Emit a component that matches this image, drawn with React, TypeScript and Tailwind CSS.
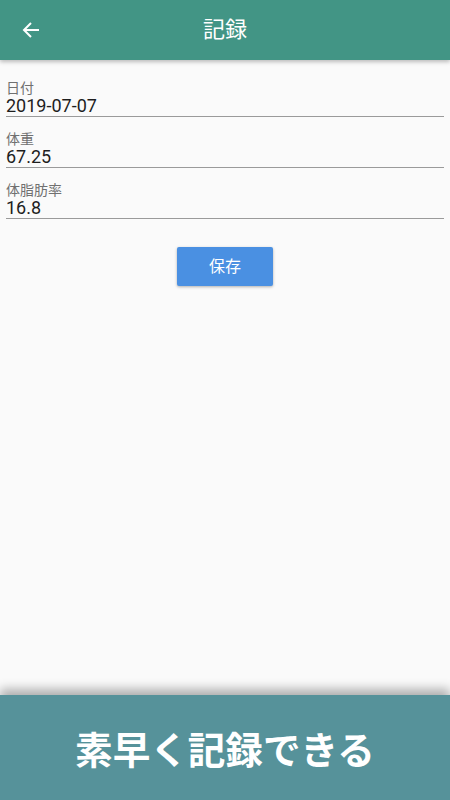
import React from "react";

const fields = [
  { label: "日付", value: "2019-07-07" },
  { label: "体重", value: "67.25" },
  { label: "体脂肪率", value: "16.8" },
];

export default function App() {
  return (
    <div
      className="w-[450px] h-[800px] flex flex-col bg-[#fafafa] overflow-hidden"
      style={{ fontFamily: "Roboto, 'Noto Sans CJK JP', sans-serif" }}
    >
      <header className="relative z-10 h-[60px] shrink-0 bg-[#429585] flex items-center shadow-[0_2px_4px_rgba(0,0,0,0.25)]">
        <div className="w-[62px] flex justify-center">
          <svg width="18" height="18" viewBox="0 0 18 18" fill="none" stroke="white" strokeWidth="2">
            <path d="M17 9H2" />
            <path d="M9 2L2 9l7 7" />
          </svg>
        </div>
        <div className="flex-1 text-center text-white text-[22px] leading-none pr-[62px]">記録</div>
      </header>

      <main className="flex-1 flex flex-col px-[6px] pt-[21px]">
        {fields.map((f) => (
          <div key={f.label} className="border-b border-[#9a9a9a] mb-[15px]">
            <div className="text-[14px] leading-[15px] text-[#707070]">{f.label}</div>
            <div className="text-[18px] leading-[20px] text-[#1e1e1e]">{f.value}</div>
          </div>
        ))}
        <div className="flex justify-center mt-[13px]">
          <button className="w-[96px] h-[39px] bg-[#4a90e2] text-white text-[16px] rounded-[2px] shadow-[0_1px_3px_rgba(0,0,0,0.3)]">
            保存
          </button>
        </div>
      </main>

      <footer className="relative h-[105px] shrink-0 bg-[#56929a] flex items-center justify-center shadow-[0_-6px_10px_rgba(0,0,0,0.3)]">
        <span
          className="text-white text-[37.6px] font-bold leading-none"
          style={{ fontFamily: "'Noto Sans CJK JP', sans-serif" }}
        >
          素早く記録できる
        </span>
      </footer>
    </div>
  );
}
